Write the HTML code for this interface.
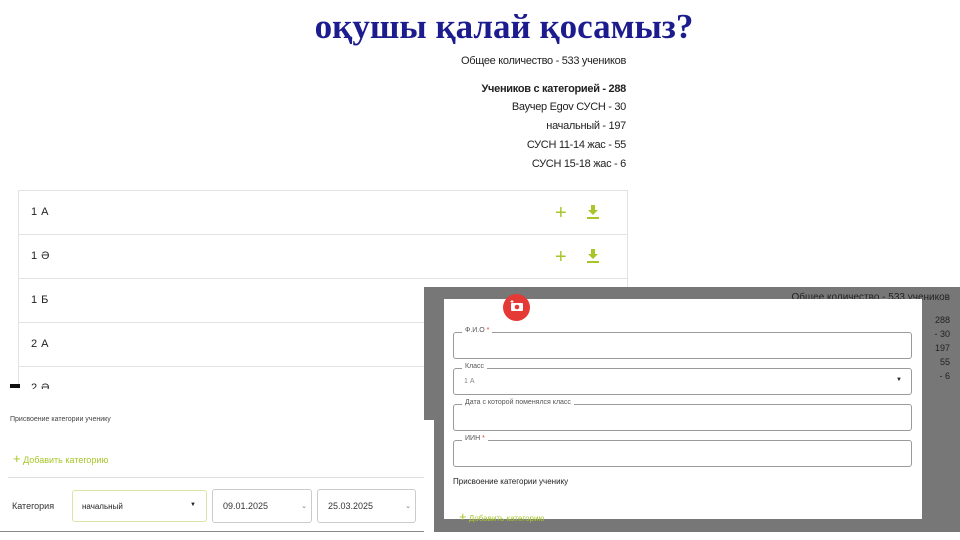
<!DOCTYPE html>
<html><head><meta charset="utf-8"><style>
*{margin:0;padding:0;box-sizing:border-box}
body{width:960px;height:540px;background:#fff;position:relative;overflow:hidden;font-family:"Liberation Sans",sans-serif;color:#222}
.a{position:absolute}
.title{left:0;width:1008px;text-align:center;top:7px;font:bold 35px "Liberation Serif",serif;color:#1c1c8e}
.st{right:334px;text-align:right;font-size:11px;letter-spacing:-0.3px;color:#222;white-space:nowrap}
.row{left:18px;width:610px;height:44px;border:1px solid #e2e2e2;border-top:none;background:#fff;font-size:11px;padding:15px 0 0 12px;letter-spacing:0.5px}
.plus{color:#a6c62a;font-size:20px;font-weight:300;line-height:1}
.f{left:453px;width:459px;height:27px;border:1px solid #9a9a9a;border-radius:3px}
.f span{position:absolute;top:-6px;left:8px;background:#fff;padding:0 3px;font-size:7px;color:#555}
.g{color:#a6c62a}
</style></head><body>
<div class="a title">оқушы қалай қосамыз?</div>
<div class="a st" style="top:55px">Общее количество - 533 учеников</div>
<div class="a st" style="top:83px;font-weight:bold">Учеников с категорией - 288</div>
<div class="a st" style="top:101px">Ваучер Egov СУСН - 30</div>
<div class="a st" style="top:120px">начальный - 197</div>
<div class="a st" style="top:139px">СУСН 11-14 жас - 55</div>
<div class="a st" style="top:158px">СУСН 15-18 жас - 6</div>

<div class="a" style="left:18px;top:190px;width:610px;border-top:1px solid #e2e2e2"></div>
<div class="a row" style="top:191px">1 А</div>
<div class="a row" style="top:235px">1 Ә</div>
<div class="a row" style="top:279px">1 Б</div>
<div class="a row" style="top:323px">2 А</div>
<div class="a row" style="top:367px">2 Ә</div>
<div class="a plus" style="left:555px;top:203px">+</div>
<div class="a plus" style="left:555px;top:247px">+</div>
<svg class="a" style="left:587px;top:205px" width="12" height="14"><path d="M4 0h4v5h3L6 10 1 5h3z M0 12h12v2H0z" fill="#a6c62a"/></svg>
<svg class="a" style="left:587px;top:249px" width="12" height="14"><path d="M4 0h4v5h3L6 10 1 5h3z M0 12h12v2H0z" fill="#a6c62a"/></svg>

<!-- bottom-left panel -->
<div class="a" style="left:0;top:389px;width:432px;height:143px;background:#fff;border-bottom:1px solid #888"></div>
<div class="a" style="left:10px;top:384px;width:10px;height:4px;background:#111"></div>
<div class="a" style="left:10px;top:416px;font-size:7px;color:#444">Присвоение категории ученику</div>
<div class="a g" style="left:13px;top:451px;font-size:9px"><b style="font-size:13px;font-weight:normal">+</b> Добавить категорию</div>
<div class="a" style="left:8px;top:477px;width:418px;border-top:1px solid #ddd"></div>
<div class="a" style="left:12px;top:501px;font-size:9px;color:#333">Категория</div>
<div class="a" style="left:72px;top:490px;width:135px;height:32px;border:1px solid #d9e6a8;border-radius:3px;font-size:8px;padding:11px 0 0 9px">начальный<span style="position:absolute;right:10px;top:11px;font-size:6px">▼</span></div>
<div class="a" style="left:212px;top:489px;width:100px;height:34px;border:1px solid #ccc;border-radius:3px;font-size:9px;padding:11px 0 0 10px;color:#333">09.01.2025<span style="position:absolute;right:4px;top:12px;font-size:7px;color:#777">⌄</span></div>
<div class="a" style="left:317px;top:489px;width:99px;height:34px;border:1px solid #ccc;border-radius:3px;font-size:9px;padding:11px 0 0 10px;color:#333">25.03.2025<span style="position:absolute;right:4px;top:12px;font-size:7px;color:#777">⌄</span></div>
<div class="a" style="left:434px;top:420px;width:2px;height:112px;background:#999"></div>

<!-- right overlay -->
<div class="a" style="left:424px;top:287px;width:536px;height:245px;background:#777"></div>
<div class="a" style="left:424px;top:420px;width:10px;height:112px;background:#fff"></div>
<div class="a" style="right:10px;top:292px;font-size:10px;color:#222">Общее количество - 533 учеников</div>
<div class="a" style="right:10px;top:313px;font-size:9px;color:#222;text-align:right;line-height:14px">288<br>- 30<br>197<br>55<br>- 6</div>
<div class="a" style="left:444px;top:299px;width:478px;height:220px;background:#fff"></div>
<div class="a" style="left:503px;top:294px;width:27px;height:27px;border-radius:50%;background:#e53935"></div>
<svg class="a" style="left:510px;top:300px" width="14" height="12"><rect x="1" y="3" width="12" height="8" rx="1" fill="#fff"/><circle cx="7" cy="7" r="2.3" fill="#e53935"/><path d="M2 0v3M0.5 1.5h3" stroke="#fff"/></svg>
<div class="a f" style="top:332px"><span>Ф.И.О <b style="color:#e53935;font-weight:normal">*</b></span></div>
<div class="a f" style="top:368px"><span>Класс</span><div class="a" style="left:10px;top:9px;font-size:7px;color:#888">1 А</div><div class="a" style="right:9px;top:8px;font-size:6px">▼</div></div>
<div class="a f" style="top:404px"><span>Дата с которой поменялся класс</span></div>
<div class="a f" style="top:440px"><span>ИИН <b style="color:#e53935;font-weight:normal">*</b></span></div>
<div class="a" style="left:453px;top:477px;font-size:8px;color:#222">Присвоение категории ученику</div>
<div class="a g" style="left:459px;top:509px;font-size:8px"><b style="font-size:13px;font-weight:normal">+</b> Добавить категорию</div>
</body></html>
